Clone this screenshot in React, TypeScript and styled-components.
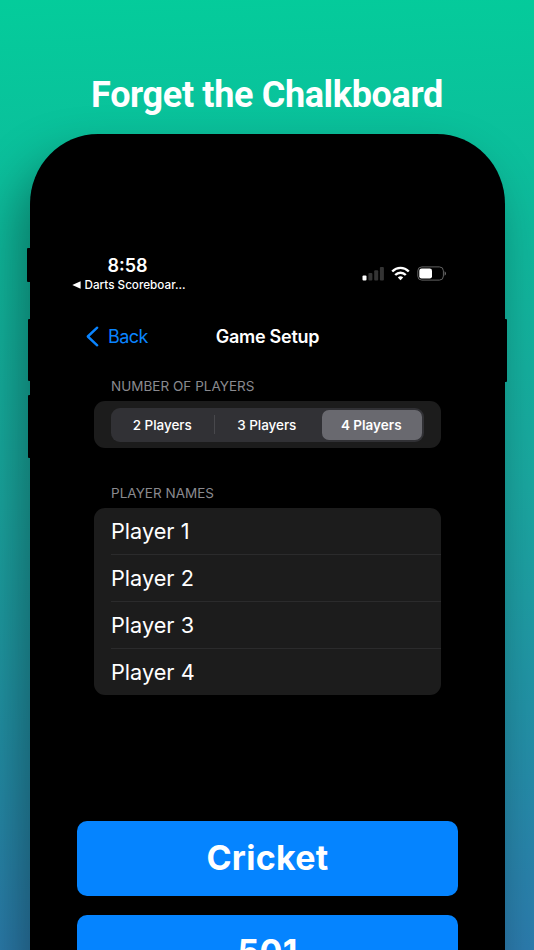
import React, { useState } from "react";
import styled, { createGlobalStyle } from "styled-components";

const GlobalStyle = createGlobalStyle`
  * { box-sizing: border-box; }
  body { margin: 0; overflow: hidden; }
  button { border: 0; padding: 0; background: none; font: inherit; color: inherit; white-space: nowrap; }
`;

const Poster = styled.main`
  width: 534px;
  height: 950px;
  overflow: hidden;
  display: flex;
  flex-direction: column;
  align-items: center;
  background: linear-gradient(178deg, #04cc9b 0%, #10b79c 28%, #1aa7a0 52%, #2292a6 75%, #2c7bad 100%);
  font-family: Inter, "Liberation Sans", sans-serif;
  color: #fff;
`;

const Headline = styled.h1`
  flex: none;
  margin: 74px 0 0;
  height: 59.5px;
  font: 700 36px/42px Roboto, sans-serif;
  letter-spacing: -0.35px;
  white-space: nowrap;
`;

const Phone = styled.section`
  position: relative;
  flex: none;
  width: 475px;
  height: 960px;
  margin-left: 1px;
  border-radius: 68px / 70px;
  background: #000;
  box-shadow: -12px 26px 50px rgba(0, 0, 0, 0.36);
  display: flex;
  flex-direction: column;
`;

const SideKey = styled.i<{ $side: "left" | "right"; $top: number; $height: number; $depth: number }>`
  position: absolute;
  ${(p) => p.$side}: ${(p) => -p.$depth}px;
  top: ${(p) => p.$top}px;
  width: 8px;
  height: ${(p) => p.$height}px;
  border-radius: 1px;
  background: #000;
`;

const StatusBar = styled.div`
  display: flex;
  justify-content: space-between;
  height: 54px;
  margin-top: 121px;
  padding: 0 58px 0 42px;
`;

const StatusLeft = styled.div`
  width: 114px;
  display: flex;
  flex-direction: column;
`;

const Time = styled.div`
  margin-top: -1px;
  padding-right: 3px;
  text-align: center;
  font-size: 18px;
  font-weight: 600;
  line-height: 24px;
`;

const ReturnLink = styled.div`
  display: flex;
  align-items: center;
  gap: 3.5px;
  margin-top: -0.5px;
  font-size: 11.7px;
  font-weight: 500;
  line-height: 16px;
  letter-spacing: 0;
  white-space: nowrap;

  svg { flex: none; }
`;

const StatusIcons = styled.div`
  display: flex;
  align-items: center;
  height: 16px;
  margin-top: 11px;
`;

const NavBar = styled.nav`
  display: grid;
  grid-template-columns: 130px 1fr 130px;
  align-items: center;
  height: 40px;
  margin-top: 7.5px;
  font-size: 18px;
`;

const BackButton = styled.button`
  display: flex;
  align-items: center;
  gap: 9px;
  padding-left: 56px;
  letter-spacing: -0.55px;
  color: #0a84ff;
`;

const NavTitle = styled.h2`
  margin: 0;
  text-align: center;
  font-size: 18px;
  font-weight: 600;
  letter-spacing: -0.25px;
`;

const SectionLabel = styled.h3<{ $top: number }>`
  margin: ${(p) => p.$top}px 0 6px 81px;
  height: 18px;
  font-size: 13.5px;
  font-weight: 400;
  line-height: 18px;
  letter-spacing: 0.02px;
  color: #8a8a8f;
`;

const Card = styled.div`
  width: 347px;
  margin-left: 64px;
  border-radius: 11px;
  background: #1c1c1c;
`;

const SegmentCard = styled(Card)`
  height: 46.5px;
  padding: 6.5px 17px 0;
`;

const Segments = styled.div`
  display: grid;
  grid-template-columns: 104px 105px 102px;
  width: 313px;
  height: 34.5px;
  padding: 2px 2px 2px 0;
  border-radius: 9px;
  background: #313135;
`;

const Segment = styled.button<{ $active: boolean; $divided: boolean }>`
  position: relative;
  margin-left: ${(p) => (p.$active ? 1.5 : 0)}px;
  padding-right: ${(p) => (p.$active ? 1 : 1.5)}px;
  border-radius: 7px;
  background: ${(p) => (p.$active ? "#69696f" : "transparent")};
  font-size: 13.5px;
  font-weight: ${(p) => (p.$active ? 600 : 500)};
  letter-spacing: ${(p) => (p.$active ? 0 : -0.05)}px;

  &::after {
    content: "";
    display: ${(p) => (p.$divided ? "block" : "none")};
    position: absolute;
    right: 0;
    top: 5.5px;
    width: 1px;
    height: 19px;
    background: #48484c;
  }
`;

const NameList = styled(Card)`
  height: 187.5px;
  padding-left: 17px;
`;

const NameRow = styled.div`
  height: 46.9px;
  display: flex;
  align-items: center;
  font-size: 21.7px;
  font-weight: 400;
  white-space: nowrap;

  & + & { border-top: 1px solid #2b2b2c; padding-bottom: 1px; }
`;

const Games = styled.div`
  display: flex;
  flex-direction: column;
  gap: 19.5px;
  margin: 126px 47px 0;
`;

const GameButton = styled.button`
  height: 74.5px;
  border-radius: 10px;
  background: #0584ff;
  font-size: 34px;
  font-weight: 700;
  line-height: 74px;
  letter-spacing: 0.3px;
`;

const SignalIcon = () => (
  <svg width="22" height="15" viewBox="0 0 22 15">
    <rect x="0.5" y="9.5" width="4" height="5" rx="1" fill="#fff" />
    <rect x="6.4" y="7" width="4" height="7.5" rx="1" fill="#343434" />
    <rect x="12.2" y="4.2" width="4" height="10.3" rx="1" fill="#343434" />
    <rect x="17.9" y="1" width="4" height="13.5" rx="1" fill="#343434" />
  </svg>
);

const WifiIcon = styled.svg`
  margin-left: 7px;
`;

const BatteryIcon = styled.svg`
  margin: 0 0 0 7px;
`;

const choices = [2, 3, 4];

export default function App() {
  const [count, setCount] = useState(4);
  return (
    <>
      <GlobalStyle />
      <Poster>
        <Headline>Forget the Chalkboard</Headline>
        <Phone>
          <SideKey $side="left" $top={114.5} $height={33.5} $depth={3} />
          <SideKey $side="left" $top={185} $height={62.5} $depth={2.3} />
          <SideKey $side="left" $top={261.5} $height={62.5} $depth={2.3} />
          <SideKey $side="right" $top={185} $height={63} $depth={2.2} />
          <StatusBar>
            <StatusLeft>
              <Time>8:58</Time>
              <ReturnLink>
                <svg width="9" height="8" viewBox="0 0 9 8"><path d="M0.3 4 8.6 0.2V7.8Z" fill="#fff" /></svg>
                Darts Scoreboar...
              </ReturnLink>
            </StatusLeft>
            <StatusIcons>
              <SignalIcon />
              <WifiIcon width="19" height="15" viewBox="0 0 19 15" fill="none" stroke="#fff" strokeWidth="2.4">
                <path d="M1.2 5.5C6 0.7 13 0.7 17.8 5.5" />
                <path d="M4.2 9C7.2 5.9 11.8 5.9 14.8 9" />
                <path d="M6.8 11.4C8.4 9.7 10.6 9.7 12.2 11.4L9.5 14.2Z" fill="#fff" stroke="none" />
              </WifiIcon>
              <BatteryIcon width="30" height="15" viewBox="0 0 30 15">
                <rect x="0.8" y="0.9" width="25.6" height="13.2" rx="4" fill="none" stroke="#626262" />
                <rect x="2.3" y="2.5" width="12.7" height="10" rx="2.3" fill="#fff" />
                <path d="M27.6 5.3C29.4 6 29.4 9 27.6 9.7Z" fill="#737373" />
              </BatteryIcon>
            </StatusIcons>
          </StatusBar>
          <NavBar>
            <BackButton>
              <svg width="13" height="21" viewBox="0 0 13 21" fill="none" stroke="#0a84ff" strokeWidth="2.4" strokeLinecap="round" strokeLinejoin="round">
                <path d="M11.2 1.7 1.8 10.5 11.2 19.3" />
              </svg>
              Back
            </BackButton>
            <NavTitle>Game Setup</NavTitle>
          </NavBar>
          <SectionLabel $top={21}>NUMBER OF PLAYERS</SectionLabel>
          <SegmentCard>
            <Segments>
              {choices.map((n, i) => (
                <Segment
                  key={n}
                  $active={n === count}
                  $divided={i < 2 && n !== count && choices[i + 1] !== count}
                  onClick={() => setCount(n)}
                >
                  {n} Players
                </Segment>
              ))}
            </Segments>
          </SegmentCard>
          <SectionLabel $top={36}>PLAYER NAMES</SectionLabel>
          <NameList>
            {[1, 2, 3, 4].map((n) => <NameRow key={n}>Player {n}</NameRow>)}
          </NameList>
          <Games>
            <GameButton>Cricket</GameButton>
            <GameButton>501</GameButton>
          </Games>
        </Phone>
      </Poster>
    </>
  );
}
